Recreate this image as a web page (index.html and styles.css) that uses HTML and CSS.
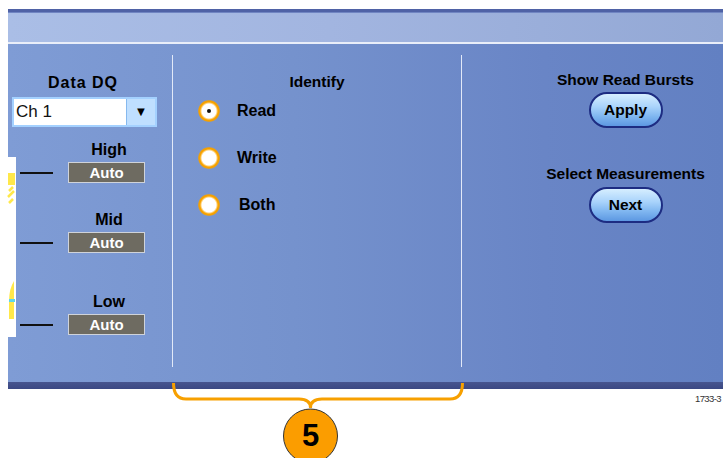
FILE: index.html
```html
<!DOCTYPE html>
<html>
<head>
<meta charset="utf-8">
<link rel="stylesheet" href="styles.css">
</head>
<body>
<div class="screen">
  <div class="topstrip"></div>
  <div class="band"></div>
  <div class="sep"></div>
  <div class="panel">
    <div class="col col-left">
      <div class="title">Data DQ</div>
      <div class="dropdown">
        <span class="dd-value">Ch 1</span>
        <span class="dd-arrow">&#9660;</span>
      </div>
      <div class="level level-high">
        <div class="level-label">High</div>
        <div class="level-line"></div>
        <div class="auto">Auto</div>
      </div>
      <div class="level level-mid">
        <div class="level-label">Mid</div>
        <div class="level-line"></div>
        <div class="auto">Auto</div>
      </div>
      <div class="level level-low">
        <div class="level-label">Low</div>
        <div class="level-line"></div>
        <div class="auto">Auto</div>
      </div>
    </div>
    <div class="divider"></div>
    <div class="col col-mid">
      <div class="heading">Identify</div>
      <div class="radios">
        <div class="radio-row"><span class="radio checked"></span><span class="radio-label">Read</span></div>
        <div class="radio-row"><span class="radio"></span><span class="radio-label">Write</span></div>
        <div class="radio-row"><span class="radio"></span><span class="radio-label shift">Both</span></div>
      </div>
    </div>
    <div class="divider"></div>
    <div class="col col-right">
      <div class="heading">Show Read Bursts</div>
      <div class="pill">Apply</div>
      <div class="heading second">Select Measurements</div>
      <div class="pill pill-next">Next</div>
    </div>
  </div>
  <div class="bottomstrip"></div>
</div>
<div class="figno">1733-3</div>

<div class="waveform">
  <svg width="16" height="180" viewBox="0 0 16 180">
    <rect x="8" y="16" width="7" height="12" fill="#ffe84a"/>
    <path d="M9 34 L13 30 M8 40 L14 34 M9 46 L13 42" stroke="#ffe84a" stroke-width="2.5"/>
    <path d="M14 124 Q9 132 9 144 L9 162 L14 162 L14 124 Z" fill="#ffe84a"/>
    <rect x="9" y="142" width="6" height="3" fill="#5fd8e8"/>
  </svg>
</div>

<svg class="callout" width="723" height="458" viewBox="0 0 723 458">
  <path d="M173.5 383 Q173.5 399 186 399 L299 399 Q310.5 399 310.5 408 Q310.5 399 322 399 L450 399 Q462.5 399 462.5 383" fill="none" stroke="#f7a000" stroke-width="3"/>
  <circle cx="310.5" cy="436" r="27" fill="#fb9d00" stroke="#333" stroke-width="1"/>
  <text x="310.5" y="446" class="callout-num" text-anchor="middle">5</text>
</svg>
</body>
</html>
```
FILE: styles.css
```css
html, body {
  margin: 0;
  padding: 0;
  background: #ffffff;
  width: 723px;
  height: 458px;
  overflow: hidden;
  position: relative;
  font-family: "Liberation Sans", Arial, sans-serif;
}

.screen {
  margin: 9px 0 0 8px;
  width: 715px;
}

.topstrip {
  height: 4px;
  background: linear-gradient(180deg, #4f62a6 0, #4f62a6 3px, #7085c2 3px);
}

.band {
  height: 29px;
  background: linear-gradient(90deg, #aabee6 0%, #a2b5e0 45%, #93a8d5 100%);
}

.sep {
  height: 2px;
  background: #e9eef9;
}

.panel {
  height: 338px;
  display: grid;
  grid-template-columns: 164px 1px 288px 1px 1fr;
  background: linear-gradient(90deg, #7f9cd5 0%, #7592cd 40%, #6985c6 75%, #6280c2 100%);
}

.bottomstrip {
  height: 7px;
  background: linear-gradient(180deg, #47558f 0, #3b4883 100%);
}

.divider {
  margin: 11px 0 15px 0;
  background: #e2e9f8;
}

.col {
  display: flex;
  flex-direction: column;
}

/* Left column */
.col-left {
  padding-top: 30px;
}

.title {
  font-weight: bold;
  font-size: 16px;
  line-height: 18px;
  letter-spacing: 1px;
  text-align: center;
  color: #000;
  padding-right: 14px;
}

.dropdown {
  margin: 5px 0 0 4px;
  width: 145px;
  height: 30px;
  box-sizing: border-box;
  border: 2px solid #a4d1ff;
  background: #ffffff;
  display: flex;
}

.dd-value {
  flex: 1;
  font-size: 17px;
  line-height: 26px;
  padding-left: 2px;
  color: #111;
}

.dd-arrow {
  width: 28px;
  background: #bfdfff;
  border-left: 1px solid #86b9ee;
  font-size: 13px;
  line-height: 26px;
  text-align: center;
  color: #000;
}

.level {
  display: grid;
  grid-template-columns: 12px 33px 15px 77px;
  grid-template-rows: 18px 21px;
  row-gap: 3px;
}

.level-high { margin-top: 14px; }
.level-mid { margin-top: 28px; }
.level-low { margin-top: 40px; }

.level-label {
  grid-column: 4;
  grid-row: 1;
  font-weight: bold;
  font-size: 16px;
  line-height: 18px;
  text-align: center;
  padding-left: 5px;
  color: #000;
}

.level-line {
  grid-column: 2;
  grid-row: 2;
  align-self: center;
  height: 2px;
  background: #111;
}

.auto {
  grid-column: 4;
  grid-row: 2;
  box-sizing: border-box;
  border: 1px solid #cfd3da;
  background: #6e6b61;
  color: #ffffff;
  font-weight: bold;
  font-size: 15px;
  line-height: 19px;
  text-align: center;
}

/* Middle column */
.col-mid {
  padding-top: 29px;
}

.heading {
  font-weight: bold;
  font-size: 15.5px;
  line-height: 18px;
  text-align: center;
  color: #000;
}

.radios {
  margin-top: 9px;
  padding-left: 25px;
  display: flex;
  flex-direction: column;
  gap: 25px;
}

.radio-row {
  display: flex;
  align-items: center;
  height: 22px;
}

.radio {
  width: 22px;
  height: 22px;
  border-radius: 50%;
  background: radial-gradient(circle, #ffffff 0, #ffffff 7px, #ffd27a 8px, #f8a300 9px, #f5a000 10px, rgba(245,160,0,0.5) 11px, rgba(245,160,0,0) 11.5px);
  position: relative;
}

.radio.checked::after {
  content: "";
  position: absolute;
  left: 9px;
  top: 9px;
  width: 4px;
  height: 4px;
  border-radius: 50%;
  background: #111;
}

.radio-label {
  margin-left: 17px;
  font-weight: bold;
  font-size: 16px;
  color: #000;
}

.radio-label.shift {
  margin-left: 19px;
}

/* Right column */
.col-right {
  padding: 27px 0 0 66px;
  align-items: center;
}

.col-right .heading {
  width: 100%;
}

.heading.second {
  margin-top: 37px;
}

.pill {
  margin-top: 3px;
  width: 74px;
  height: 36px;
  box-sizing: border-box;
  border: 2px solid #1d2c82;
  border-radius: 18px;
  background: linear-gradient(180deg, #d6eeff 0%, #a9d3fb 40%, #7fb6f0 70%, #5d98e2 100%);
  font-weight: bold;
  font-size: 15.5px;
  line-height: 32px;
  text-align: center;
  color: #000;
}

.pill-next {
  margin-top: 4px;
}

/* Annotations */
.figno {
  margin: 4px 0 0 695px;
  white-space: nowrap;
  font-size: 9.5px;
  letter-spacing: -0.6px;
  color: #333;
}

.waveform {
  position: absolute;
  left: 0;
  top: 157px;
  width: 16px;
  height: 180px;
  background: #ffffff;
}

.waveform svg {
  display: block;
}

.callout {
  position: absolute;
  left: 0;
  top: 0;
  pointer-events: none;
}

.callout-num {
  font-family: "Liberation Sans", Arial, sans-serif;
  font-weight: bold;
  font-size: 31px;
  fill: #000;
}
```
